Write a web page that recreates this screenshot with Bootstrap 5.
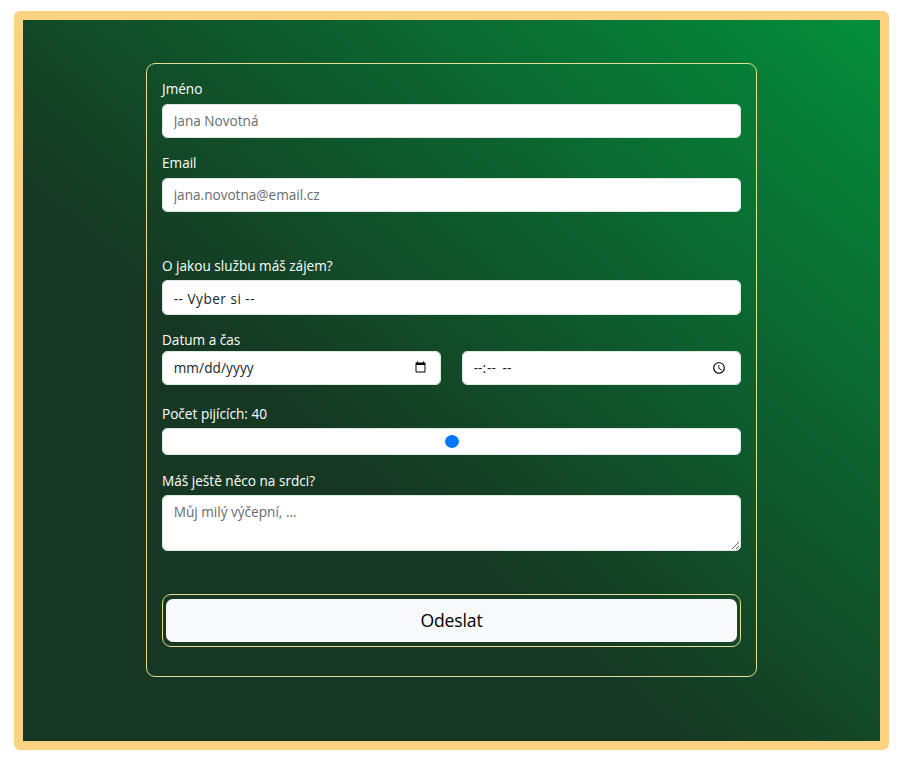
<!DOCTYPE html>
<html lang="en-US">
<head>
<meta charset="utf-8">
<meta name="viewport" content="width=device-width, initial-scale=1">
<title>Objednávka</title>
<link href="https://cdn.jsdelivr.net/npm/bootstrap@5.3.0/dist/css/bootstrap.min.css" rel="stylesheet">
<style>
html{font-size:14.25px}
body{font-family:"Segoe UI","Open Sans","Noto Sans",sans-serif;background:#fff}
.frame{margin:11px 18px 0 14px;height:739px;border:9px solid #fdd282;border-radius:6px;padding-top:43px;
background:linear-gradient(to top right,#163823 38.5%,#038e3c) padding-box}
.order-form{width:611px;height:614px;margin-left:123px;padding:15px 15px 0;border:1px solid #e3df94;border-radius:9px}
.form-label{display:block;height:21px;line-height:19px;margin:0 0 4px;color:#fff;font-size:13.6px}
.field{margin-bottom:15px}
.order-form .form-control{height:34px;font-size:13.6px;border-color:#dee9e2;border-radius:5px;color:#212529;background-color:#fff}
.order-form .form-control::placeholder{color:#666c72}
.order-form input[type=text],.order-form input[type=email]{padding-top:4px;padding-bottom:6px}
.order-form select.form-control{height:35px;padding-top:7px;padding-bottom:4px;letter-spacing:.5px}
.order-form textarea.form-control{height:56px;padding-top:6px}
.order-form input[type=date]{letter-spacing:.1px}
.order-form input[type=time]::-webkit-datetime-edit{letter-spacing:1px;word-spacing:2px}
.order-form input[type=time]::-webkit-datetime-edit-ampm-field{margin-left:3px}
.order-form input[type=time]::-webkit-datetime-edit-hour-field,
.order-form input[type=time]::-webkit-datetime-edit-minute-field,
.order-form input[type=time]::-webkit-datetime-edit-ampm-field{letter-spacing:1px}
.order-form .slider{height:27px;display:block}
.slider::-webkit-slider-thumb{-webkit-appearance:none;width:14px;height:13px;border-radius:50%;background:#0075ff}
.slider::-moz-range-thumb{width:14px;height:13px;border:0;border-radius:50%;background:#0075ff}
.tight{margin-bottom:0}
.service-label{padding-top:1px}
.low-label{line-height:21px}
.schedule{margin-bottom:18.5px}
.pair{gap:21px}
.send-ring{height:53px;padding:4px 3px;border:1px solid #e3df94;border-radius:9px}
.send-ring .btn{height:43px;padding:0;font-size:17.6px;letter-spacing:-.15px;border:0;border-radius:7px;color:#000}
</style>
<script src="https://cdn.jsdelivr.net/npm/bootstrap@5.3.0/dist/js/bootstrap.bundle.min.js"></script>
</head>
<body>
<main class="frame">
<form class="order-form">
<div class="field"><label class="form-label" for="name">Jméno</label><input class="form-control" id="name" type="text" placeholder="Jana Novotná"></div>
<div class="field pb-4 mb-4"><label class="form-label" for="email">Email</label><input class="form-control" id="email" type="email" placeholder="jana.novotna@email.cz"></div>
<div class="field"><label class="form-label service-label" for="service">O jakou službu máš zájem?</label><select class="form-control" id="service"><option>-- Vyber si --</option></select></div>
<div class="schedule"><label class="form-label tight" for="date">Datum a čas</label>
<div class="d-flex pair"><input class="form-control" id="date" type="date"><input class="form-control" type="time" aria-label="Čas"></div></div>
<div class="field"><label class="form-label low-label" for="count">Počet pijících: 40</label><input class="form-control slider" id="count" type="range" min="0" max="80" value="40"></div>
<div class="field"><label class="form-label low-label" for="note">Máš ještě něco na srdci?</label><textarea class="form-control" id="note" placeholder="Můj milý výčepní, ..."></textarea></div>
<div class="send-ring mt-5"><button class="btn btn-light w-100 d-block" type="button">Odeslat</button></div>
</form>
</main>
</body>
</html>
